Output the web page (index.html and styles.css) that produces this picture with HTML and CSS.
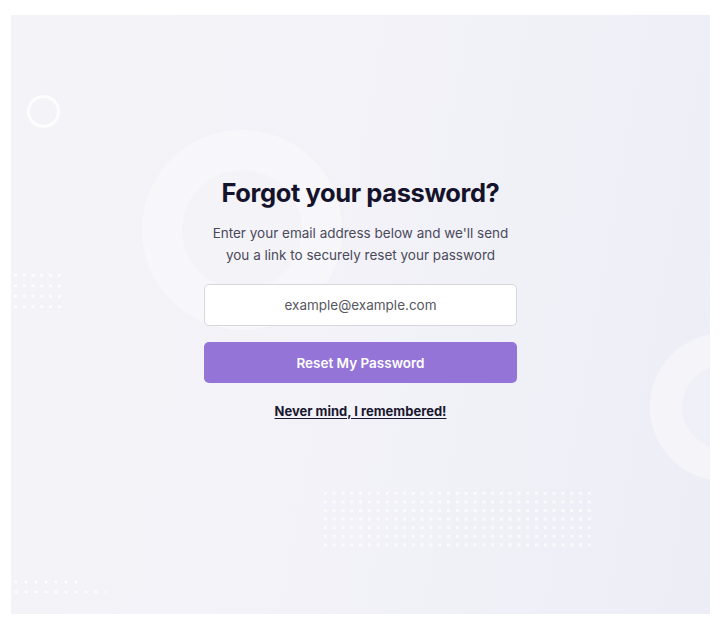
FILE: index.html
```html
<!DOCTYPE html>
<html lang="en">
<head>
<meta charset="utf-8">
<title>Forgot your password?</title>
<link rel="stylesheet" href="styles.css">
</head>
<body>
<div class="frame">
  <div class="deco ring-small"></div>
  <div class="deco ring-big"></div>
  <div class="deco ring-right"></div>
  <div class="deco dots dots-tl"></div>
  <div class="deco dots dots-bl1"></div>
  <div class="deco dots dots-bl2"></div>
  <div class="deco dots dots-mid"></div>
  <main class="card">
    <h1 class="title">Forgot your password?</h1>
    <p class="lead">Enter your email address below and we'll send<br>you a link to securely reset your password</p>
    <input class="email" type="email" placeholder="example@example.com">
    <button class="btn" type="button">Reset My Password</button>
    <a class="back" href="#">Never mind, I remembered!</a>
  </main>
</div>
</body>
</html>
```

FILE: styles.css
```css
* { box-sizing: border-box; }
html, body { margin: 0; padding: 0; background: #ffffff; }
body { font-family: Inter, "Noto Sans", sans-serif; }

.frame {
  position: relative;
  overflow: hidden;
  margin: 15px 10px 0 11px;
  height: 599px;
  background: linear-gradient(100deg, #f3f3f8 0%, #f2f2f8 50%, #ededf6 100%);
}

.deco { position: absolute; pointer-events: none; }

.ring-small {
  left: 16px; top: 80px;
  width: 33px; height: 33px;
  border-radius: 50%;
  border: 3px solid rgba(255,255,255,0.8);
}
.ring-big {
  left: 131px; top: 115px;
  width: 200px; height: 200px;
  border-radius: 50%;
  border: 40px solid rgba(255,255,255,0.32);
  background: rgba(255,255,255,0.12);
}
.ring-right {
  left: 639px; top: 318px;
  width: 148px; height: 148px;
  border-radius: 50%;
  border: 32px solid rgba(255,255,255,0.3);
  background: rgba(255,255,255,0.12);
}

.dots {
  background-image: radial-gradient(circle, rgba(255,255,255,1) 1.3px, transparent 1.7px);
}
.dots-tl {
  left: 0; top: 255px;
  width: 52px; height: 40px;
  background-size: 8.8px 10.5px;
  opacity: 0.9;
}
.dots-bl1 {
  left: 0; top: 562px;
  width: 70px; height: 10px;
  background-size: 10px 10px;
}
.dots-bl2 {
  left: 0; top: 572px;
  width: 95px; height: 10px;
  background-size: 10px 10px;
}
.dots-mid {
  left: 310px; top: 474px;
  width: 272px; height: 62px;
  background-size: 8.8px 8.6px;
  opacity: 0.75;
}

.card {
  position: relative;
  display: flex;
  flex-direction: column;
  align-items: center;
  padding-top: 161px;
}

.title {
  margin: 0;
  font-family: Inter, "Noto Sans", sans-serif;
  font-weight: 700;
  font-size: 25.5px;
  line-height: 34px;
  letter-spacing: -0.4px;
  color: #15132b;
}

.lead {
  margin: 12px 0 0;
  font-size: 13.5px;
  line-height: 22px;
  text-align: center;
  color: #4b4a5a;
}

.email {
  margin-top: 18px;
  width: 313px;
  height: 42px;
  border: 1.5px solid #d6d6dc;
  border-radius: 5px;
  background: #ffffff;
  font-family: inherit;
  font-size: 13.5px;
  text-align: center;
  color: #333;
  outline: none;
}
.email::placeholder { color: #58575f; opacity: 1; }

.btn {
  margin-top: 16px;
  width: 313px;
  height: 41px;
  border: 0;
  border-radius: 5px;
  background: #9474d7;
  color: #ffffff;
  font-family: inherit;
  font-weight: 600;
  font-size: 13.5px;
  cursor: pointer;
}

.back {
  margin-top: 18px;
  font-size: 13px;
  line-height: 20px;
  font-weight: 700;
  color: #1a1830;
  text-decoration: underline;
  text-underline-offset: 2px;
}
```
